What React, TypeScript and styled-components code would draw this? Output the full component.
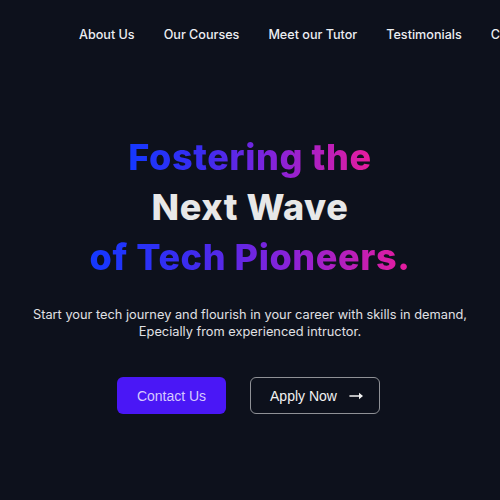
import React from "react";
import styled, { createGlobalStyle } from "styled-components";

const Global = createGlobalStyle`
  html, body { margin: 0; padding: 0; background: #0d111c; }
  body { font-family: "Inter", "Open Sans", sans-serif; color: #e6e6e6; overflow: hidden; }
  #root { width: 500px; height: 500px; overflow: hidden; }
`;

const Page = styled.div`
  width: 500px;
  height: 500px;
  background: #0d111c;
  display: flex;
  flex-direction: column;
  overflow: hidden;
`;

const Nav = styled.nav`
  display: flex;
  align-items: center;
  gap: 29px;
  padding: 24px 0 0 79px;
  height: 20px;
  white-space: nowrap;
`;

const NavLink = styled.a`
  font-size: 12.6px;
  font-weight: 500;
  color: #eceef2;
  text-decoration: none;
  flex: none;
`;

const Hero = styled.section`
  display: flex;
  flex-direction: column;
  align-items: center;
  padding-top: 88px;
`;

const Title = styled.h1`
  margin: 0;
  font-size: 36px;
  font-weight: 800;
  line-height: 50px;
  text-align: center;
  letter-spacing: 0.6px;
`;

const Line = styled.span<{ $plain?: boolean }>`
  display: inline-block;
  ${(p) =>
    p.$plain
      ? `color: #e8e8e8;`
      : `background: linear-gradient(90deg, #1438ff 0%, #3a2cf0 30%, #8a22d8 62%, #e81c9c 100%);
         -webkit-background-clip: text;
         background-clip: text;
         color: transparent;`}
`;

const Sub = styled.p`
  margin: 24px 0 0;
  font-size: 12.8px;
  line-height: 17px;
  text-align: center;
  color: #e0e0e4;
`;

const Actions = styled.div`
  display: flex;
  gap: 24px;
  margin-top: 37px;
  padding-right: 3px;
`;

const Button = styled.button<{ $primary?: boolean }>`
  height: 37px;
  border-radius: 6px;
  font-family: "Liberation Sans", Arial, sans-serif;
  font-size: 14px;
  display: flex;
  align-items: center;
  justify-content: center;
  gap: 12px;
  cursor: pointer;
  ${(p) =>
    p.$primary
      ? `width: 109px; background: #4a17f6; border: none; color: #d6c9ff;`
      : `width: 130px; background: transparent; border: 1px solid #8f9196; color: #f2f2f2; padding-left: 10px;`}
`;

export default function App() {
  return (
    <Page>
      <Global />
      <Nav>
        <NavLink>About Us</NavLink>
        <NavLink>Our Courses</NavLink>
        <NavLink>Meet our Tutor</NavLink>
        <NavLink>Testimonials</NavLink>
        <NavLink>Contact</NavLink>
      </Nav>
      <Hero>
        <Title>
          <Line>Fostering the</Line>
          <br />
          <Line $plain>Next Wave</Line>
          <br />
          <Line>of Tech Pioneers.</Line>
        </Title>
        <Sub>
          Start your tech journey and flourish in your career with skills in demand,
          <br />
          Epecially from experienced intructor.
        </Sub>
        <Actions>
          <Button $primary>Contact Us</Button>
          <Button>
            Apply Now
            <svg width="15" height="10" viewBox="0 0 15 10" fill="none">
              <path d="M1 5h11" stroke="#f2f2f2" strokeWidth="1.6" strokeLinecap="round" />
              <path d="M10 1.8L14 5l-4 3.2z" fill="#f2f2f2" />
            </svg>
          </Button>
        </Actions>
      </Hero>
    </Page>
  );
}
